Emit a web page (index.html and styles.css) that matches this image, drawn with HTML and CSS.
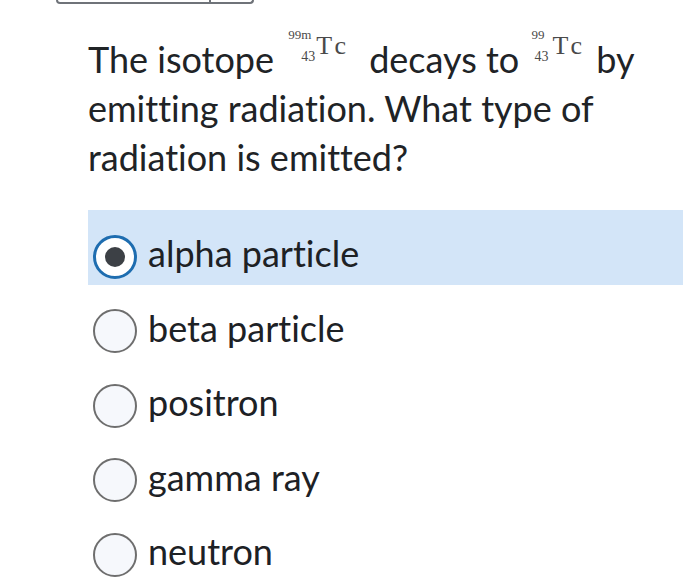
FILE: index.html
```html
<!DOCTYPE html>
<html>
<head>
<meta charset="utf-8">
<link rel="stylesheet" href="styles.css">
</head>
<body>
<div class="topbox"><span class="topbox-left"></span><span class="topbox-right"></span></div>
<p class="question">The isotope <span class="iso iso-a"><span class="nuc"><span class="mass">99m</span><span class="z">43</span></span><span class="sym">Tc</span></span> decays to <span class="iso iso-b"><span class="nuc"><span class="mass">99</span><span class="z">43</span></span><span class="sym">Tc</span></span> by emitting radiation. What type of radiation is emitted?</p>
<div class="options">
  <label class="option selected"><span class="radio"><span class="dot"></span></span><span class="label">alpha particle</span></label>
  <label class="option"><span class="radio"></span><span class="label">beta particle</span></label>
  <label class="option"><span class="radio"></span><span class="label">positron</span></label>
  <label class="option"><span class="radio"></span><span class="label">gamma ray</span></label>
  <label class="option"><span class="radio"></span><span class="label">neutron</span></label>
</div>
</body>
</html>
```
FILE: styles.css
```css
html, body {
  margin: 0;
  padding: 0;
  background: #ffffff;
}
body {
  width: 700px;
  height: 580px;
  overflow: hidden;
  font-family: Lato, "Liberation Sans", sans-serif;
  font-variant-ligatures: none;
  color: #202326;
}
.topbox {
  display: flex;
  margin-left: 56px;
  width: 194px;
  height: 2px;
  border: 2px solid #6f7379;
  border-top: none;
  border-radius: 0 0 5px 5px;
}
.topbox-left {
  width: 151px;
  border-right: 2px solid #6f7379;
}
.question {
  margin: 25px 0 0 88px;
  width: 580px;
  font-size: 36px;
  line-height: 49px;
}
.iso {
  display: inline-block;
  font-family: "Liberation Serif", serif;
  font-size: 26px;
  line-height: 1;
  color: #4a4a4a;
  vertical-align: 19px;
}
.iso-a {
  padding: 0 10px 0 5px;
}
.iso-b {
  padding: 0 1px 0 3px;
}
.iso-a .sym {
  margin-left: 1px;
}
.iso-b .sym {
  margin-left: 4px;
}
.nuc {
  display: inline-flex;
  flex-direction: column;
  align-items: flex-end;
  font-size: 13px;
  line-height: 12px;
  gap: 10px;
  vertical-align: 15px;
}
.mass {
  margin-right: 4px;
}
.z {
  font-size: 14px;
}
.sym {
  letter-spacing: 4px;
}
.options {
  margin-top: 28px;
  display: flex;
  flex-direction: column;
}
.option {
  display: flex;
  align-items: center;
  height: 74.5px;
  box-sizing: border-box;
  margin-left: 88px;
  width: 595px;
  padding: 19px 0 0 5px;
  font-size: 36px;
  color: #1d2125;
}
.option.selected {
  background: #d3e5f8;
}
.radio {
  width: 44px;
  height: 44px;
  box-sizing: border-box;
  border-radius: 50%;
  border: 2px solid #6e6e6e;
  background: #f6f8fc;
  display: flex;
  align-items: center;
  justify-content: center;
  flex-shrink: 0;
}
.option.selected .radio {
  border: 3px solid #1e6db0;
  background: #ffffff;
}
.dot {
  width: 20px;
  height: 20px;
  border-radius: 50%;
  background: #3c4045;
}
.label {
  margin-left: 11px;
  line-height: 44px;
  padding-bottom: 7px;
}
```
